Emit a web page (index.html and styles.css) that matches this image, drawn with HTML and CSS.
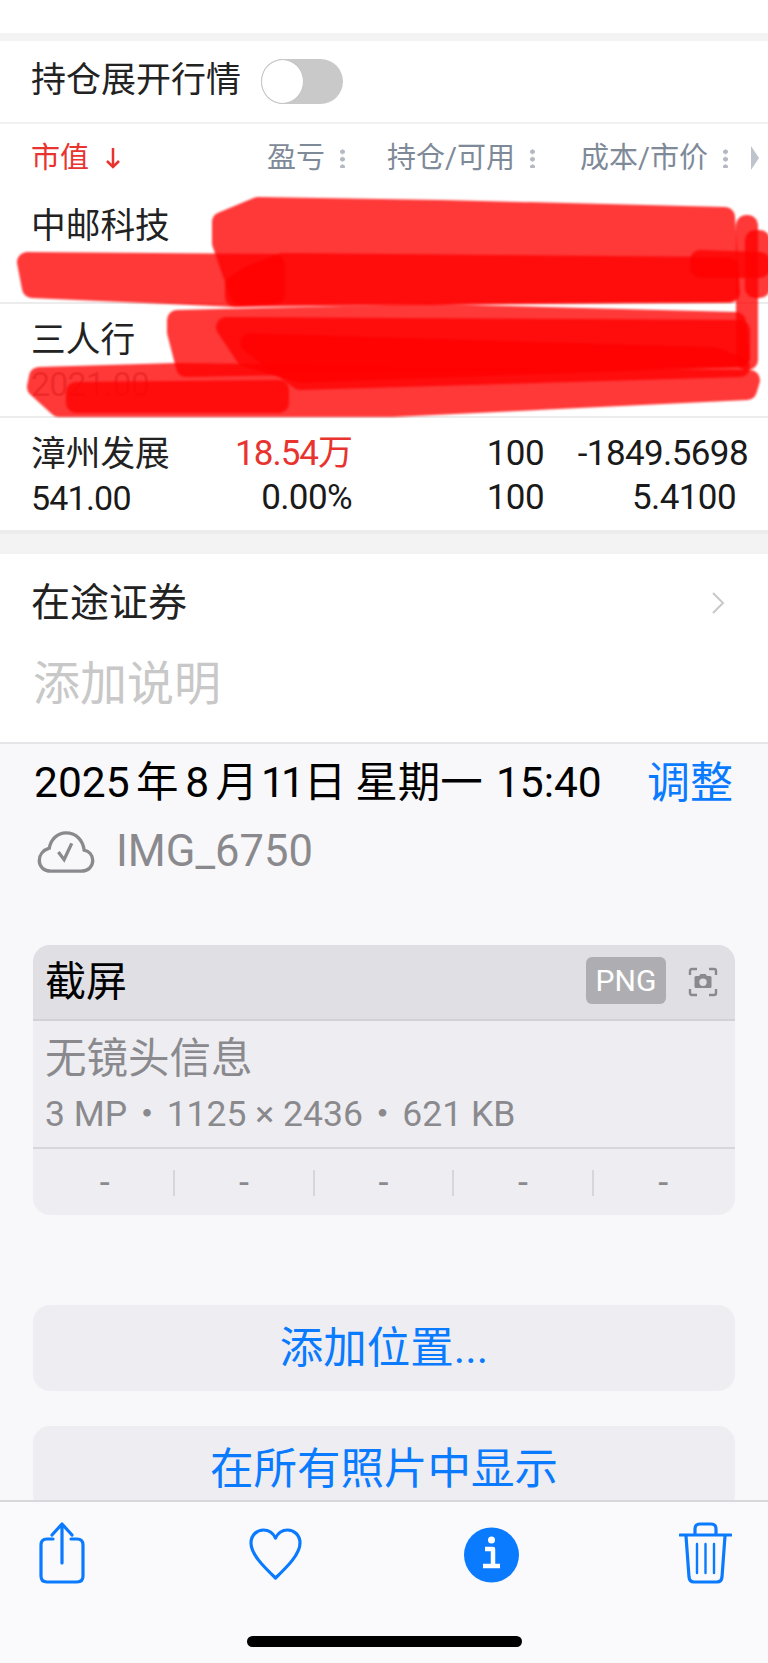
FILE: index.html
```html
<!DOCTYPE html>
<html lang="zh-CN">
<head>
<meta charset="utf-8">
<title>照片信息</title>
<link rel="stylesheet" href="styles.css">
</head>
<body>
<div class="page">
  <main class="scroll">
    <div class="shot">
      <div class="top-white"></div>
      <div class="band"></div>
      <div class="toggle-row">
        <span class="toggle-label">持仓展开行情</span>
        <span class="toggle"><span class="knob"></span></span>
      </div>
      <div class="head-row">
        <span class="sort">市值<svg class="sort-arrow" viewBox="0 0 16 22"><path d="M8 1v19M2 14l6 6 6-6"/></svg></span>
        <span class="hcell h1">盈亏<i class="dots"></i></span>
        <span class="hcell h2">持仓/可用<i class="dots"></i></span>
        <span class="hcell h3">成本/市价<i class="dots"></i></span>
        <i class="more"></i>
      </div>
      <div class="stock"><span class="name">中邮科技</span></div>
      <div class="stock"><span class="name">三人行</span><span class="price peek">2021.00</span></div>
      <div class="stock">
        <span class="name">漳州发展</span><span class="num red">18.54万</span><span class="num">100</span><span class="num">-1849.5698</span>
        <span class="price">541.00</span><span class="num">0.00%</span><span class="num">100</span><span class="num inset">5.4100</span>
      </div>
      <div class="band wide"></div>
      <div class="transit">
        <div class="transit-title"><span>在途证券</span>
          <svg class="chev" viewBox="0 0 14 24"><path d="M2 2l10 10L2 22"/></svg>
        </div>
        <div class="caption">添加说明</div>
      </div>
    </div>
    <section class="info">
      <div class="date-row">
        <div class="date">
          <span>2025 年 8 月</span>
          <span class="tight">11</span>
          <span class="day">日</span>
          <span class="week">星期一</span>
          <span class="time">15:40</span>
        </div>
        <span class="adjust">调整</span>
      </div>
      <div class="file-row">
        <svg class="cloud" viewBox="0 0 60 44"><path d="M14 42h32c7 0 12-4.500 12-11 0-6-4-10-9-11C47.500 9 40 2 30 2 21 2 14 9 12.500 18 6 20 2 25 2 31c0 6.500 5 11 12 11z"/><path d="M22 22l6 8 8-17"/></svg>
        <span class="file">IMG_6750</span>
      </div>
      <div class="card">
        <div class="card-head">
          <span class="card-title">截屏</span>
          <span class="badge">PNG</span>
          <svg class="cam" viewBox="0 0 30 30"><path class="cam-line" d="M2 8V4q0-2 2-2h5M21 2h5q2 0 2 2v4M28 22v4q0 2-2 2h-5M9 28H4q-2 0-2-2v-4"/><path class="cam-body" fill-rule="evenodd" d="M8 9h3l1.500-2h5L19 9h3q1.500 0 1.500 1.500v9q0 1.500-1.500 1.500H8q-1.500 0-1.500-1.500v-9Q6.500 9 8 9zm7 2.500a3.700 3.700 0 1 0 0 7.400 3.700 3.700 0 0 0 0-7.400z"/></svg>
        </div>
        <div class="card-body">
          <div class="lens">无镜头信息</div>
          <div class="meta">3 MP<span class="sep">・</span>1125 × 2436<span class="sep">・</span>621 KB</div>
        </div>
        <div class="card-foot">
          <span>-</span><span>-</span><span>-</span><span>-</span><span>-</span>
        </div>
      </div>
      <div class="btn">添加位置...</div>
      <div class="btn">在所有照片中显示</div>
    </section>
  </main>
  <footer class="toolbar">
    <div class="tools">
      <svg class="tool t-share" viewBox="0 0 48 62"><path d="M15 17H9q-6 0-6 6v31q0 6 6 6h30q6 0 6-6V23q0-6-6-6h-6"/><path d="M24 41V2M14 13L24 2l10 11"/></svg>
      <svg class="tool t-heart" viewBox="0 0 55 62"><path d="M27.500 56C15 44 3 32 3 21 3 13 9 8 15.500 8c5 0 9.500 3 12 8 2.500-5 7-8 12-8C46 8 52 13 52 21c0 11-12 23-24.500 35z"/></svg>
      <svg class="tool t-info" viewBox="0 0 55 62"><circle class="solid" cx="27.500" cy="33" r="27.500"/><circle class="hole" cx="27.500" cy="18" r="3.500"/><path class="glyph" d="M21 27h8v17M19 44h17"/></svg>
      <svg class="tool t-trash" viewBox="0 0 53 62"><path d="M1 13h51M16 12V7q0-5 5-5h11q5 0 5 5v5"/><path d="M7 14l3 41q.500 5 5 5h23q4.500 0 5-5l3-41"/><path class="thin" d="M18 22v29M26.500 22v29M35 22v29"/></svg>
    </div>
    <div class="home-bar"></div>
  </footer>
  <svg class="redaction" viewBox="0 0 768 440">
    <g class="strokes">
      <path d="M222 222L258 207 441 210 725 217 730 293 240 295 222 243z"/>
      <path d="M27 262L275 264 275 295 235 297 32 288z"/>
      <path d="M282 263L728 267 728 292 235 297 235 285 250 275z"/>
      <path d="M700 260L760 262 760 268 700 268z"/>
      <path d="M755 240L760 240 760 288 755 288z"/>
      <path d="M746 225L748 225 748 360 746 360z"/>
      <path d="M177 320L431 314 736 322 740 357 186 367 177 332z"/>
      <path d="M226 327L740 330 740 357 300 373 246 357z"/>
      <path d="M39 377L176 373 750 380 747 390 392 407 59 407 37 387z"/>
      <path d="M76 392L279 390 279 403 76 403z"/>
      <path d="M250 343L715 357 740 367 300 380z"/>
    </g>
  </svg>
</div>
</body>
</html>
```

FILE: styles.css
```css
* { box-sizing: border-box; }
html, body { margin: 0; padding: 0; }
body {
  width: 768px;
  height: 1663px;
  overflow: hidden;
  background: #f8f8fa;
  font-family: Roboto, "Noto Sans CJK SC", sans-serif;
  color: #222;
}
.page {
  position: relative;
  width: 768px;
  height: 1663px;
  display: flex;
  flex-direction: column;
}
.scroll { flex: 1; min-height: 0; overflow: hidden; }
.shot { background: #fff; }
.top-white { height: 33px; }
.band { height: 8px; background: #f3f3f3; }
.band.wide { height: 22px; border-top: 2px solid #ececec; }

.toggle-row {
  height: 83px;
  padding-left: 31px;
  display: flex;
  align-items: center;
  gap: 20px;
  border-bottom: 2px solid #f1f1f1;
  padding-bottom: 2px;
}
.toggle-label { font-size: 35px; line-height: 44px; }
.toggle {
  width: 82px;
  height: 45px;
  border-radius: 23px;
  background: #c9c9c9;
  display: block;
  margin-top: 2px;
}
.knob {
  display: block;
  width: 43px;
  height: 45px;
  border-radius: 50%;
  background: #fff;
  border: 1.500px solid #c4c4c4;
}

.head-row {
  height: 66px;
  padding: 2px 0 0 31px;
  display: flex;
  align-items: center;
  font-size: 29px;
  line-height: 40px;
  color: #7f8a99;
}
.sort { color: #e8332f; display: flex; align-items: center; width: 236px; }
.sort-arrow { width: 16px; height: 22px; margin-left: 16px; fill: none; stroke: #e8332f; stroke-width: 2.500px; }
.hcell { display: flex; align-items: center; }
.h1 { width: 120px; }
.h2 { width: 193px; }
.h3 { width: 171px; }
.dots {
  display: block;
  width: 5px;
  height: 20px;
  margin-left: 15px;
  background: radial-gradient(circle, #b3b9c2 2.200px, transparent 2.600px) 0 0 / 5px 7.500px repeat-y;
}
.more {
  display: block;
  width: 0;
  height: 0;
  margin-left: 0;
  border-left: 8px solid #bfc4cc;
  border-top: 12px solid transparent;
  border-bottom: 12px solid transparent;
}

.stock {
  display: grid;
  grid-template-columns: 141px 180px 192px 204px;
  grid-auto-rows: 44px;
  height: 114px;
  padding: 14px 0 0 31px;
  border-bottom: 2px solid #ececec;
  align-items: center;
}
.name { font-size: 34.700px; line-height: 44px; grid-column: 1; color: #222; }
.price { font-size: 34px; line-height: 44px; grid-column: 1; letter-spacing: -.8px; color: #1a1a1a; }
.peek { color: #bbb; }
.num { font-size: 35px; line-height: 44px; text-align: right; letter-spacing: -.6px; color: #1a1a1a; }
.num.red { color: #e8332f; letter-spacing: -1px; }
.inset { padding-right: 12px; }

.transit { height: 190px; padding: 24px 43px 0 31px; border-bottom: 2px solid #e6e6e8; }
.transit-title { display: flex; justify-content: space-between; align-items: center; font-size: 39px; line-height: 50px; }
.chev { width: 14px; height: 24px; fill: none; stroke: #c8c8cc; stroke-width: 2px; }
.caption { margin: 26px 0 0 2px; font-size: 47px; line-height: 60px; color: #c8c8c8; }

.info { padding: 0 33px; }
.date-row {
  height: 72px;
  padding: 5px 2px 0 1px;
  display: flex;
  justify-content: space-between;
  align-items: center;
}
.date {
  display: flex;
  align-items: baseline;
  font-size: 42.500px;
  line-height: 50px;
  word-spacing: -4px;
  color: #000;
}
.tight { letter-spacing: -4px; margin-left: 3px; }
.day { margin-left: 3px; }
.week { margin-left: 9px; }
.time { margin-left: 13px; }
.adjust { font-size: 43px; line-height: 50px; color: #0a7aff; }
.file-row { height: 60px; display: flex; align-items: center; padding-left: 4px; margin-top: 6px; }
.cloud { width: 58px; height: 42px; fill: none; stroke: #8a8a8e; stroke-width: 3.500px; }
.file {
  margin-left: 21px;
  font-size: 43.500px;
  line-height: 50px;
  color: #8a8a8e;
}

.card {
  margin-top: 63px;
  height: 270px;
  border-radius: 17px;
  overflow: hidden;
  background: #eeeef2;
}
.card-head {
  height: 76px;
  padding: 0 17px 0 12px;
  background: #dfdfe4;
  border-bottom: 2px solid #d1d1d6;
  display: flex;
  align-items: center;
}
.card-title { font-size: 41px; line-height: 50px; color: #000; flex: 1; }
.badge {
  width: 80px;
  height: 47px;
  border-radius: 6px;
  background: #aeaeb2;
  color: #fff;
  font-size: 30px;
  line-height: 47px;
  text-align: center;
  margin-top: -3px;
}
.cam { width: 30px; height: 30px; margin-left: 22px; }
.cam-line { fill: none; stroke: #8a8a8e; stroke-width: 2.400px; }
.cam-body { fill: #8a8a8e; }
.card-body { height: 128px; padding: 12px 12px 0; border-bottom: 2px solid #d6d6db; color: #8a8a8e; }
.lens { font-size: 41.500px; line-height: 52px; }
.meta { margin-top: 4px; font-size: 35.500px; line-height: 44px; white-space: nowrap; }
.sep { font-family: "Noto Sans CJK SC", sans-serif; margin: 0 2px; }
.card-foot { display: grid; grid-template-columns: repeat(5, 1fr); padding: 21px 2px 0 3px; }
.card-foot span {
  height: 26px;
  line-height: 26px;
  font-size: 36px;
  color: #8a8a8e;
  text-align: center;
  border-right: 2px solid #d6d6db;
}
.card-foot span:last-child { border-right: 0; }

.btn {
  margin-top: 35px;
  height: 86px;
  border-radius: 17px;
  background: #eeeef2;
  color: #0a7aff;
  font-size: 43.500px;
  line-height: 88px;
  text-align: center;
}
.card + .btn { margin-top: 90px; }

.toolbar {
  height: 163px;
  position: relative;
  background: #fafafc;
  border-top: 2px solid #d8d8dc;
  padding-top: 20px;
}
.tools { display: flex; justify-content: space-between; padding: 0 36px 0 38px; height: 62px; }
.tool { height: 62px; fill: none; stroke: #0a7aff; stroke-width: 3.200px; stroke-linecap: round; stroke-linejoin: round; }
.t-share { width: 48px; }
.t-heart { width: 55px; margin-left: 2px; }
.t-info { width: 55px; margin-left: 2px; }
.t-trash { width: 53px; }
.solid { fill: #0a7aff; stroke: none; }
.hole { fill: #fff; stroke: none; }
.glyph { stroke: #fff; stroke-width: 4.500px; stroke-linecap: butt; }
.thin { stroke-width: 2.400px; }
.home-bar { width: 275px; height: 11px; margin: 52px auto 0; border-radius: 6px; background: #000; }

.redaction { position: absolute; left: 0; top: 0; width: 768px; height: 440px; pointer-events: none; }
.strokes { filter: blur(1.200px); }
.strokes path { fill: #f00; stroke: #f00; stroke-width: 20px; stroke-linejoin: round; opacity: .78; }
```
